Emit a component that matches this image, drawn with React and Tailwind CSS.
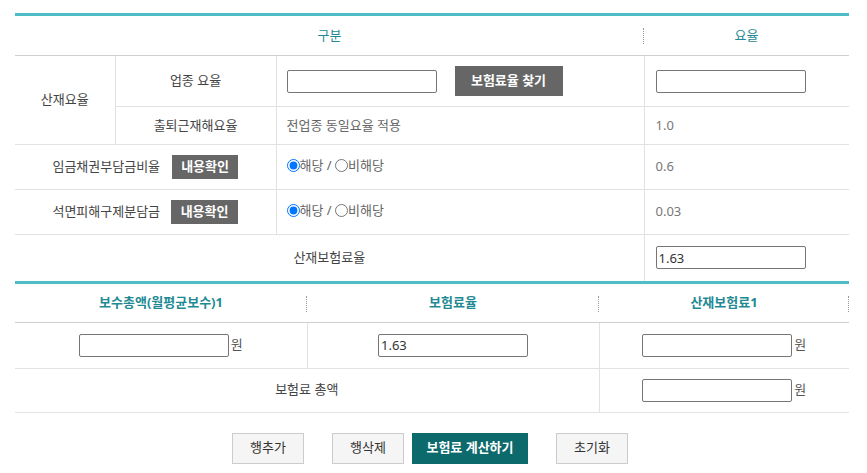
import React from "react";

const Input = ({ value = "", w = "w-[150px]" }) => (
  <input
    readOnly
    value={value}
    className={`${w} h-[23px] border border-[#767676] rounded-[2px] px-[2px] text-[13px] text-[#333] bg-white align-middle`}
  />
);

const GrayBtn = ({ children, cls = "" }) => (
  <span className={`inline-flex items-center justify-center bg-[#666] text-white font-bold text-[13px] ${cls}`}>
    {children}
  </span>
);

const Dots = () => (
  <span className="absolute right-0 top-[12px] h-[16px] border-r border-dotted border-[#999]" />
);

const Radio = ({ name }) => (
  <span className="inline-flex items-center text-[13px] text-[#666]">
    <input type="radio" name={name} defaultChecked className="m-0 w-[13px] h-[13px]" />
    <span>해당 /&nbsp;</span>
    <input type="radio" name={name} className="m-0 w-[13px] h-[13px]" />
    <span>비해당</span>
  </span>
);

export default function App() {
  const td = "border-b border-[#e2e2e2] p-0";
  return (
    <div className="w-[867px] h-[473px] bg-white pl-[15px] pt-[13px] font-['Noto_Sans','Noto_Sans_CJK_KR',sans-serif] text-[13px] text-[#444]">
      <table className="w-[834px] table-fixed border-collapse border-t-[3px] border-[#4fbdc6]">
        <colgroup>
          <col className="w-[100px]" />
          <col className="w-[161px]" />
          <col className="w-[368px]" />
          <col className="w-[205px]" />
        </colgroup>
        <tbody>
          <tr className="h-[41px]">
            <td colSpan={3} className="relative border-b border-[#cfcfcf] text-center text-[#1f8a93] p-0">
              구분
              <Dots />
            </td>
            <td className="border-b border-[#cfcfcf] text-center text-[#1f8a93] p-0">요율</td>
          </tr>
          <tr className="h-[51px]">
            <td rowSpan={2} className={`${td} border-r text-center`}>산재요율</td>
            <td className={`${td} border-r text-center`}>업종 요율</td>
            <td className={`${td} border-r pl-[10px]`}>
              <div className="flex items-center">
                <Input />
                <GrayBtn cls="ml-[18px] w-[108px] h-[30px]">보험료율 찾기</GrayBtn>
              </div>
            </td>
            <td className={`${td} pl-[11px]`}>
              <Input />
            </td>
          </tr>
          <tr className="h-[38px]">
            <td className={`${td} border-r text-center`}>출퇴근재해요율</td>
            <td className={`${td} border-r pl-[10px] text-[#666]`}>전업종 동일요율 적용</td>
            <td className={`${td} pl-[11px] text-[#777]`}>1.0</td>
          </tr>
          <tr className="h-[45px]">
            <td colSpan={2} className={`${td} border-r text-center`}>
              <span className="inline-flex items-center">
                임금채권부담금비율
                <GrayBtn cls="ml-[12px] w-[66px] h-[24px]">내용확인</GrayBtn>
              </span>
            </td>
            <td className={`${td} border-r pl-[10px]`}>
              <Radio name="wage" />
            </td>
            <td className={`${td} pl-[11px] text-[#777]`}>0.6</td>
          </tr>
          <tr className="h-[45px]">
            <td colSpan={2} className={`${td} border-r text-center`}>
              <span className="inline-flex items-center">
                석면피해구제분담금
                <GrayBtn cls="ml-[11px] w-[67px] h-[24px]">내용확인</GrayBtn>
              </span>
            </td>
            <td className={`${td} border-r pl-[10px]`}>
              <Radio name="asbestos" />
            </td>
            <td className={`${td} pl-[11px] text-[#777]`}>0.03</td>
          </tr>
          <tr className="h-[46px]">
            <td colSpan={3} className="border-r border-[#e2e2e2] text-center p-0">산재보험료율</td>
            <td className="pl-[11px] p-0">
              <Input value="1.63" />
            </td>
          </tr>
        </tbody>
      </table>

      <table className="w-[834px] table-fixed border-collapse border-t-[3px] border-[#4fbdc6]">
        <colgroup>
          <col className="w-[292px]" />
          <col className="w-[292px]" />
          <col className="w-[250px]" />
        </colgroup>
        <tbody>
          <tr className="h-[40px]">
            <td className="relative border-b border-[#cfcfcf] text-center text-[#1f8a93] font-bold p-0">
              보수총액(월평균보수)1
              <Dots />
            </td>
            <td className="relative border-b border-[#cfcfcf] text-center text-[#1f8a93] font-bold p-0">
              보험료율
              <Dots />
            </td>
            <td className="relative border-b border-[#cfcfcf] text-center text-[#1f8a93] font-bold p-0">
              산재보험료1
              <Dots />
            </td>
          </tr>
          <tr className="h-[46px]">
            <td className={`${td} border-r text-center`}>
              <span className="inline-flex items-center">
                <Input />
                <span className="ml-[2px] text-[#555]">원</span>
              </span>
            </td>
            <td className={`${td} border-r text-center`}>
              <Input value="1.63" />
            </td>
            <td className={`${td} text-center`}>
              <span className="inline-flex items-center">
                <Input />
                <span className="ml-[2px] text-[#555]">원</span>
              </span>
            </td>
          </tr>
          <tr className="h-[44px]">
            <td colSpan={2} className={`${td} border-r text-center`}>보험료 총액</td>
            <td className={`${td} text-center`}>
              <span className="inline-flex items-center">
                <Input />
                <span className="ml-[2px] text-[#555]">원</span>
              </span>
            </td>
          </tr>
        </tbody>
      </table>

      <div className="w-[834px] flex justify-center mt-[20px] pr-[4px]">
        <button className="w-[72px] h-[31px] border border-[#ccc] bg-[#f5f5f5] text-[#333] text-[13px]">행추가</button>
        <button className="ml-[28px] w-[72px] h-[31px] border border-[#ccc] bg-[#f5f5f5] text-[#333] text-[13px]">행삭제</button>
        <button className="ml-[8px] w-[116px] h-[31px] bg-[#0c6a6d] text-white font-bold text-[13px]">보험료 계산하기</button>
        <button className="ml-[28px] w-[72px] h-[31px] border border-[#ccc] bg-[#f5f5f5] text-[#333] text-[13px]">초기화</button>
      </div>
    </div>
  );
}
